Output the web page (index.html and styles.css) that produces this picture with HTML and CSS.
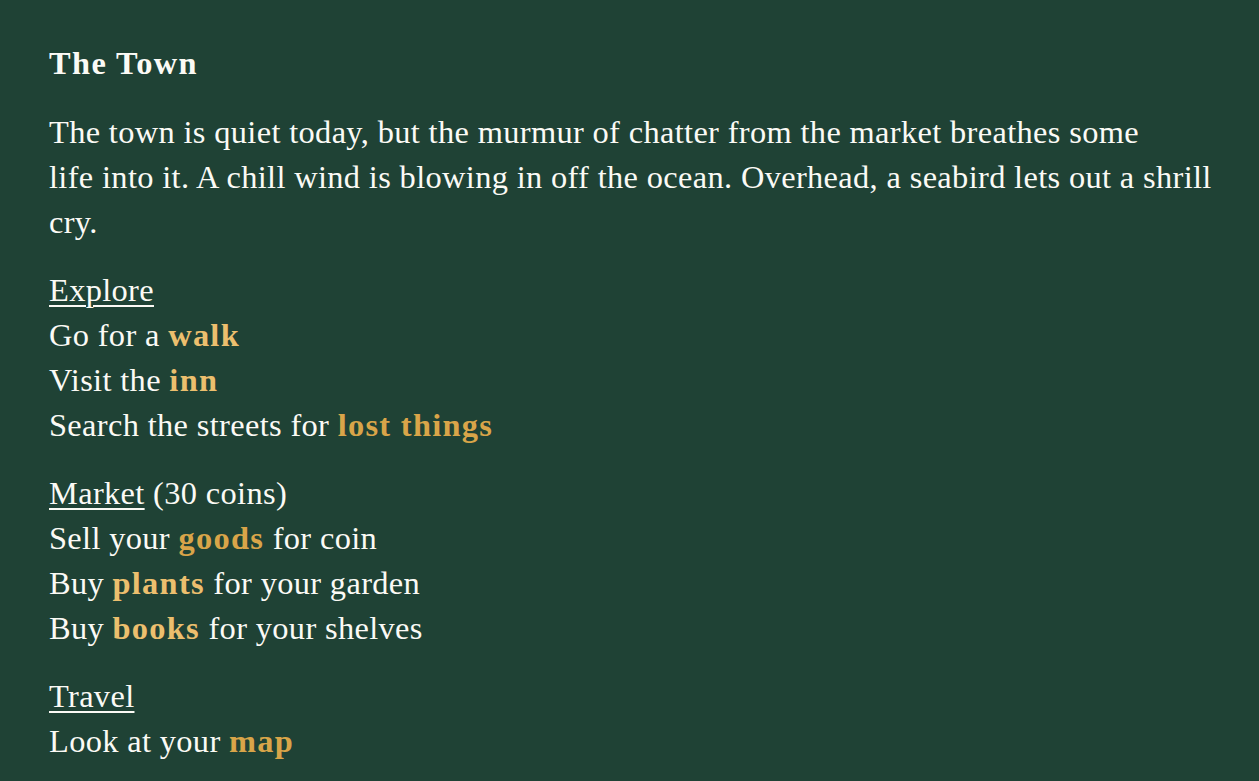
FILE: index.html
```html
<html>
	<head>
		<title>The Town</title>
		<link rel="stylesheet" href="styles.css">
	</head>
	<body>
		<div class="page">
			<h1 class="title">The Town</h1>
			<p class="desc">The town is quiet today, but the murmur of chatter from the market breathes some<br>life into it. A chill wind is blowing in off the ocean. Overhead, a seabird lets out a shrill cry.</p>

			<div class="section">
				<div><a class="head" href="#">Explore</a></div>
				<div>Go for a <b class="key light">walk</b></div>
				<div>Visit the <b class="key light">inn</b></div>
				<div>Search the streets for <b class="key dark">lost things</b></div>
			</div>

			<div class="section">
				<div><a class="head" href="#">Market</a> (30 coins)</div>
				<div>Sell your <b class="key dark">goods</b> for coin</div>
				<div>Buy <b class="key light">plants</b> for your garden</div>
				<div>Buy <b class="key light">books</b> for your shelves</div>
			</div>

			<div class="section">
				<div><a class="head" href="#">Travel</a></div>
				<div>Look at your <b class="key dark">map</b></div>
			</div>
		</div>
	</body>
</html>
```

FILE: styles.css
```css
body {
	margin: 0;
	background-color: #1f4235;
	color: #fbfaf5;
	font-family: "Liberation Serif", serif;
	font-size: 32.4px;
	line-height: 45px;
	letter-spacing: 0.35px;
}

.page {
	padding: 41px 0 40px 49px;
	max-width: 1190px;
	display: flex;
	flex-direction: column;
	gap: 23px;
}

.title {
	margin: 0 0 1px 0;
	font-size: 32.4px;
	font-weight: bold;
	letter-spacing: 1.4px;
}

.desc {
	margin: 0;
}

.head {
	color: #fbfaf5;
	text-decoration: underline;
	text-decoration-thickness: 2px;
	text-underline-offset: 4px;
}

.key {
	font-weight: bold;
	letter-spacing: 1.3px;
}

.light {
	color: #ecbf6e;
}

.dark {
	color: #d9a549;
}
```
